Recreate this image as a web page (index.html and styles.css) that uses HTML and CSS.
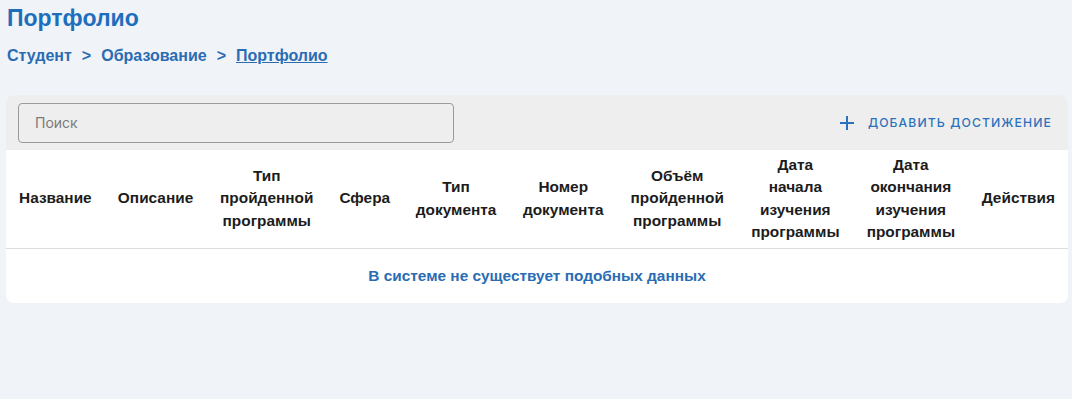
FILE: index.html
```html
<!DOCTYPE html>
<html lang="ru">
  <head>
    <meta charset="UTF-8" />
    <meta name="viewport" content="width=device-width, initial-scale=1.0" />
    <title>Портфолио</title>
    <link rel="stylesheet" href="styles.css">
  </head>
  <body>
    <h1 class="page-title">Портфолио</h1>

    <nav class="crumbs">
      <a href="#" class="crumb">Студент</a>
      <span class="crumb-sep">&gt;</span>
      <a href="#" class="crumb">Образование</a>
      <span class="crumb-sep">&gt;</span>
      <a href="#" class="crumb crumb-current">Портфолио</a>
    </nav>

    <div class="card">
      <div class="toolbar">
        <input type="text" class="search" placeholder="Поиск" />
        <button class="add-btn">
          <svg width="16" height="16" viewBox="0 0 16 16" aria-hidden="true">
            <path d="M8 1v14M1 8h14" stroke="currentColor" stroke-width="2" fill="none" />
          </svg>
          <span>Добавить достижение</span>
        </button>
      </div>

      <table class="grid">
        <thead>
          <tr>
            <th>Название</th>
            <th>Описание</th>
            <th>Тип<br />пройденной<br />программы</th>
            <th>Сфера</th>
            <th>Тип<br />документа</th>
            <th>Номер<br />документа</th>
            <th>Объём<br />пройденной<br />программы</th>
            <th>Дата<br />начала<br />изучения<br />программы</th>
            <th>Дата<br />окончания<br />изучения<br />программы</th>
            <th>Действия</th>
          </tr>
        </thead>
        <tbody>
          <tr>
            <td colspan="10" class="empty">В системе не существует подобных данных</td>
          </tr>
        </tbody>
      </table>
    </div>
  </body>
</html>
```

FILE: styles.css
```css
body {
  margin: 0;
  padding: 0 4px 0 6px;
  background-color: #f0f3f7;
  font-family: "Liberation Sans", Arial, sans-serif;
}
.page-title {
  margin: 0;
  padding: 4px 0 0 1px;
  font-size: 23px;
  line-height: 28px;
  font-weight: 700;
  color: #1d6fbe;
}
.crumbs {
  display: flex;
  gap: 10px;
  padding: 14px 0 0 1px;
  font-size: 16px;
  line-height: 20px;
  font-weight: 700;
}
.crumb,
.crumb-sep {
  color: #2a6cb3;
  text-decoration: none;
}
.crumb-current {
  text-decoration: underline;
}
.card {
  margin-top: 29px;
  background-color: #ffffff;
  border-radius: 8px;
  overflow: hidden;
}
.toolbar {
  display: flex;
  align-items: center;
  justify-content: space-between;
  height: 55px;
  padding: 0 16px 0 12px;
  background-color: #eeeeee;
}
.search {
  width: 436px;
  height: 40px;
  box-sizing: border-box;
  padding: 0 16px;
  border: 1px solid #9a9a9a;
  border-radius: 4px;
  background-color: #eeeeee;
  font-family: Inter, "Liberation Sans", sans-serif;
  font-size: 14px;
  color: #333;
}
.search::placeholder {
  color: #7a7a7a;
}
.add-btn {
  display: flex;
  align-items: center;
  gap: 13px;
  padding: 0;
  border: none;
  background: none;
  color: #2a72bd;
  font-family: Inter, "Liberation Sans", sans-serif;
  font-size: 12.2px;
  font-weight: 500;
  letter-spacing: 1.1px;
  text-transform: uppercase;
}
.grid {
  width: 100%;
  border-collapse: collapse;
}
.grid th {
  padding: 4px 10px 5px;
  font-size: 15.4px;
  line-height: 22.3px;
  font-weight: 700;
  color: #1c1c1c;
  text-align: center;
  border-bottom: 1px solid #dddddd;
}
.empty {
  height: 54px;
  padding: 0;
  text-align: center;
  font-size: 15.4px;
  font-weight: 700;
  color: #2a6cb3;
}
```
